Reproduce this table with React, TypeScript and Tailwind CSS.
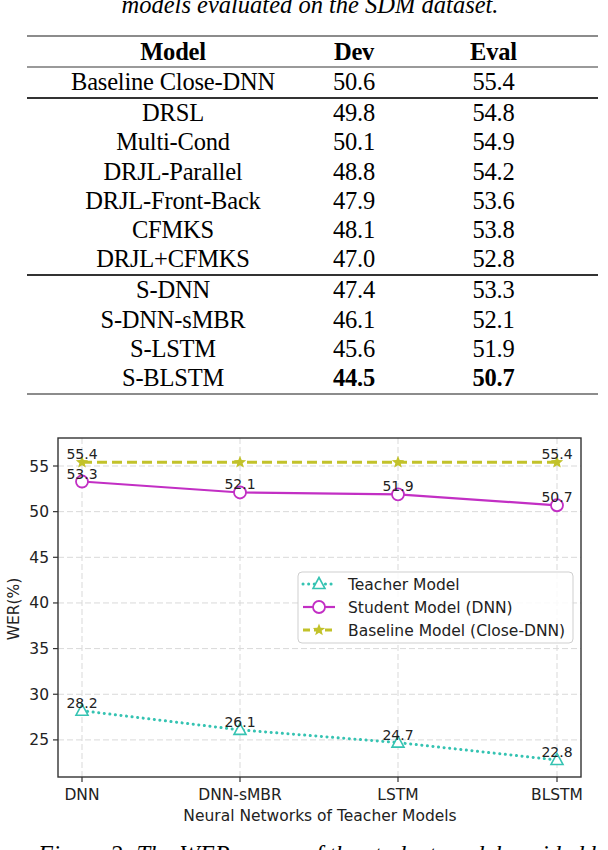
const rows: { model: string; dev: string; evalv: string; bold?: boolean }[][] = [
  [{ model: "Baseline Close-DNN", dev: "50.6", evalv: "55.4" }],
  [
    { model: "DRSL", dev: "49.8", evalv: "54.8" },
    { model: "Multi-Cond", dev: "50.1", evalv: "54.9" },
    { model: "DRJL-Parallel", dev: "48.8", evalv: "54.2" },
    { model: "DRJL-Front-Back", dev: "47.9", evalv: "53.6" },
    { model: "CFMKS", dev: "48.1", evalv: "53.8" },
    { model: "DRJL+CFMKS", dev: "47.0", evalv: "52.8" },
  ],
  [
    { model: "S-DNN", dev: "47.4", evalv: "53.3" },
    { model: "S-DNN-sMBR", dev: "46.1", evalv: "52.1" },
    { model: "S-LSTM", dev: "45.6", evalv: "51.9" },
    { model: "S-BLSTM", dev: "44.5", evalv: "50.7", bold: true },
  ],
];

const xs = [82, 240, 398, 557];
const xLabels = ["DNN", "DNN-sMBR", "LSTM", "BLSTM"];
const yTicks = [25, 30, 35, 40, 45, 50, 55];
const yOf = (v: number) => 466 + (55 - v) * 9.13;

const teacher = [28.2, 26.1, 24.7, 22.8];
const student = [53.3, 52.1, 51.9, 50.7];
const baseline = [55.4, 55.4, 55.4, 55.4];

const TEAL = "#35c3b2";
const MAGENTA = "#c22fc4";
const OLIVE = "#c2c22a";

function starPoints(cx: number, cy: number, ro: number, ri: number) {
  const pts: string[] = [];
  for (let i = 0; i < 10; i++) {
    const r = i % 2 === 0 ? ro : ri;
    const a = -Math.PI / 2 + (i * Math.PI) / 5;
    pts.push(`${(cx + r * Math.cos(a)).toFixed(2)},${(cy + r * Math.sin(a)).toFixed(2)}`);
  }
  return pts.join(" ");
}

function Triangle({ x, y }: { x: number; y: number }) {
  return (
    <polygon
      points={`${x},${y - 6.5} ${x - 6},${y + 4.5} ${x + 6},${y + 4.5}`}
      fill="white"
      stroke={TEAL}
      strokeWidth={1.6}
    />
  );
}

function Circle({ x, y }: { x: number; y: number }) {
  return <circle cx={x} cy={y} r={6} fill="white" stroke={MAGENTA} strokeWidth={1.8} />;
}

function Star({ x, y }: { x: number; y: number }) {
  return <polygon points={starPoints(x, y, 6.5, 2.8)} fill={OLIVE} />;
}

function Cell({ children, bold }: { children: React.ReactNode; bold?: boolean }) {
  return (
    <div className={bold ? "flex items-center justify-center font-bold" : "flex items-center justify-center"}>
      {children}
    </div>
  );
}

function Row({ model, dev, evalv, bold, head }: { model: string; dev: string; evalv: string; bold?: boolean; head?: boolean }) {
  return (
    <div className={head ? "grid h-[29px] grid-cols-[292px_70px_1fr] font-bold" : "grid h-[29.2px] grid-cols-[292px_70px_1fr]"}>
      <Cell>{model}</Cell>
      <Cell bold={bold}>{dev}</Cell>
      <Cell bold={bold}>{evalv}</Cell>
    </div>
  );
}

function ResultsTable() {
  return (
    <div className="ml-[27px] w-[571px] text-[24.5px] leading-[22px] tracking-[-0.2px] text-black">
      <div className="h-[2px] bg-[#8c8c8c]" />
      <Row head model="Model" dev="Dev" evalv="Eval" />
      <div className="h-[1.5px] bg-[#9a9a9a]" />
      {rows.map((group, gi) => (
        <div key={gi}>
          {gi > 0 && <div className="h-[2px] bg-[#333]" />}
          {group.map((r) => (
            <Row key={r.model} {...r} />
          ))}
        </div>
      ))}
      <div className="h-[2px] bg-[#8c8c8c]" />
    </div>
  );
}

function WerChart() {
  const line = (vals: number[]) => vals.map((v, i) => `${xs[i]},${yOf(v).toFixed(1)}`).join(" ");
  return (
    <svg className="mt-[5.5px] block" width={608} height={434} viewBox="0 400 608 434" fontFamily="'DejaVu Sans', sans-serif">
      {/* grid */}
      {xs.map((x) => (
        <line key={x} x1={x} y1={438} x2={x} y2={777} stroke="#d9d9d9" strokeWidth={1} strokeDasharray="6 3" />
      ))}
      {yTicks.map((t) => (
        <line key={t} x1={58} y1={yOf(t)} x2={581} y2={yOf(t)} stroke="#d9d9d9" strokeWidth={1} strokeDasharray="6 3" />
      ))}

      {/* series */}
      <polyline points={line(teacher)} fill="none" stroke={TEAL} strokeWidth={3} strokeDasharray="0.1 5.5" strokeLinecap="round" />
      <polyline points={line(student)} fill="none" stroke={MAGENTA} strokeWidth={2.2} />
      <polyline points={line(baseline)} fill="none" stroke={OLIVE} strokeWidth={3} strokeDasharray="10 5" />
      {teacher.map((v, i) => (
        <Triangle key={i} x={xs[i]} y={yOf(v)} />
      ))}
      {student.map((v, i) => (
        <Circle key={i} x={xs[i]} y={yOf(v)} />
      ))}
      {baseline.map((v, i) => (
        <Star key={i} x={xs[i]} y={yOf(v)} />
      ))}

      {/* point labels */}
      <g fontSize={14} fill="#222" textAnchor="middle">
        {teacher.map((v, i) => (
          <text key={`t${i}`} x={xs[i]} y={yOf(v) - 3}>{v.toFixed(1)}</text>
        ))}
        {student.map((v, i) => (
          <text key={`s${i}`} x={xs[i]} y={yOf(v) - 3}>{v.toFixed(1)}</text>
        ))}
        <text x={xs[0]} y={yOf(55.4) - 3}>55.4</text>
        <text x={xs[3]} y={yOf(55.4) - 3}>55.4</text>
      </g>

      {/* axes */}
      <rect x={58} y={438} width={523} height={339} fill="none" stroke="#333" strokeWidth={1.4} />
      {yTicks.map((t) => (
        <g key={t}>
          <line x1={53} y1={yOf(t)} x2={58} y2={yOf(t)} stroke="#333" strokeWidth={1.2} />
          <text x={49} y={yOf(t) + 5.5} fontSize={15.5} fill="#222" textAnchor="end">{t}</text>
        </g>
      ))}
      {xs.map((x, i) => (
        <g key={x}>
          <line x1={x} y1={777} x2={x} y2={782} stroke="#333" strokeWidth={1.2} />
          <text x={x} y={800} fontSize={15.5} fill="#222" textAnchor="middle">{xLabels[i]}</text>
        </g>
      ))}
      <text x={320} y={821} fontSize={15.5} fill="#222" textAnchor="middle">Neural Networks of Teacher Models</text>
      <text transform="translate(18.5,609) rotate(-90)" fontSize={15.5} fill="#222" textAnchor="middle">WER(%)</text>

      {/* legend */}
      <rect x={298} y={572} width={275} height={71} rx={4} fill="white" fillOpacity={0.85} stroke="#cfcfcf" strokeWidth={1} />
      <line x1={303} y1={584} x2={335} y2={584} stroke={TEAL} strokeWidth={3} strokeDasharray="0.1 5.5" strokeLinecap="round" />
      <Triangle x={319} y={584} />
      <line x1={303} y1={607} x2={335} y2={607} stroke={MAGENTA} strokeWidth={2.2} />
      <Circle x={319} y={607} />
      <line x1={303} y1={630} x2={335} y2={630} stroke={OLIVE} strokeWidth={3} strokeDasharray="7 4" />
      <Star x={319} y={630} />
      <g fontSize={15.5} fill="#222">
        <text x={348} y={589.5}>Teacher Model</text>
        <text x={348} y={612.5}>Student Model (DNN)</text>
        <text x={348} y={635.5}>Baseline Model (Close-DNN)</text>
      </g>
    </svg>
  );
}

export default function App() {
  return (
    <div className="relative h-[850px] w-[608px] overflow-hidden bg-white font-['Liberation_Serif',serif]">
      <div className="flex h-[35px] flex-col">
        <p className="-mt-[8px] pl-[12px] text-center text-[24.5px] italic leading-[26px] text-black">
          models evaluated on the SDM dataset.
        </p>
      </div>
      <ResultsTable />
      <WerChart />
      <p className="mt-[8px] whitespace-nowrap pl-[38px] text-[24.5px] italic leading-[26px] text-black">
        Figure 2: The WER scores of the student models guided by teacher
      </p>
    </div>
  );
}
